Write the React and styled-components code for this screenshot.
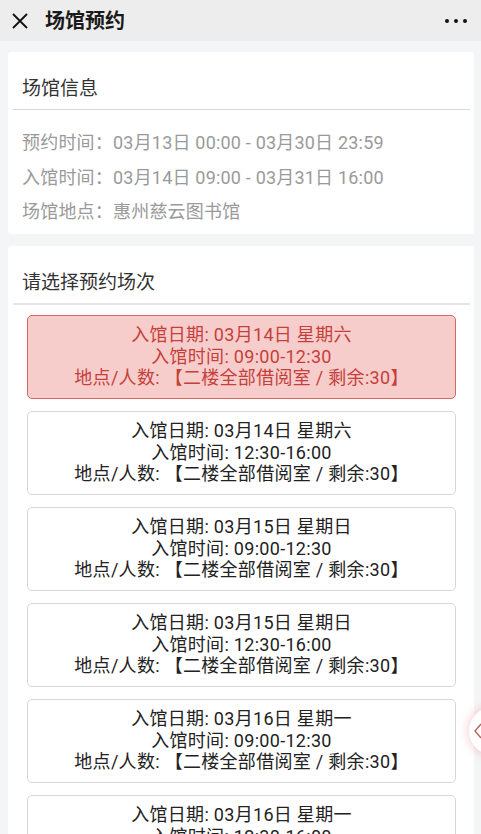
import React from 'react'
import styled, { createGlobalStyle } from 'styled-components'

const GlobalStyle = createGlobalStyle`
  html, body {
    margin: 0;
    padding: 0;
    background: #f4f5f7;
    font-family: Roboto, "Noto Sans CJK SC", sans-serif;
  }
`

const Page = styled.div`
  min-height: 100vh;
  background: #f4f5f7;
`

const TopBar = styled.div`
  height: 41px;
  background: #ededed;
  display: flex;
  align-items: center;
  padding: 0 14px 0 10px;
`

const CloseButton = styled.div`
  width: 20px;
  height: 20px;
  display: flex;
  align-items: center;
  justify-content: center;
  margin-right: 15px;
`

const Title = styled.div`
  flex: 1;
  font-size: 20px;
  font-weight: 600;
  color: #1a1a1a;
  margin-top: -2px;
`

const Dots = styled.div`
  display: flex;
  gap: 5px;
  align-items: center;
  span {
    width: 4px;
    height: 4px;
    border-radius: 50%;
    background: #111;
  }
`

const Content = styled.div`
  padding: 11px 7px 0 8px;
  display: flex;
  flex-direction: column;
  gap: 12px;
`

const Card = styled.div`
  background: #fff;
  border-radius: 3px;
  padding-bottom: ${p => p.$pb || 0}px;
`

const CardTitle = styled.div`
  height: 57px;
  box-sizing: border-box;
  padding: 12px 0 0 14px;
  display: flex;
  align-items: center;
  font-size: 19px;
  color: #333;
`

const Divider = styled.div`
  height: ${p => p.$thick ? 2 : 1}px;
  background: ${p => p.$thick ? '#e6e6e6' : '#d8d8d8'};
  margin: 0 4px 0 5px;
`

const InfoList = styled.div`
  padding: 16px 0 0 14px;
`

const InfoLine = styled.div`
  height: 34.5px;
  line-height: 34.5px;
  font-size: 18px;
  letter-spacing: 0.2px;
  color: #9a9a9a;
  white-space: nowrap;
`

const SlotList = styled.div`
  padding: 10px 18px 0 19px;
  display: flex;
  flex-direction: column;
  gap: 12px;
`

const Slot = styled.div`
  height: 84px;
  box-sizing: border-box;
  border: 1px solid ${p => p.$active ? '#cf6b64' : '#d6d6d6'};
  background: ${p => p.$active ? '#f7cdcc' : '#fff'};
  color: ${p => p.$active ? '#c5403a' : '#222'};
  border-radius: 5px;
  display: flex;
  flex-direction: column;
  align-items: center;
  justify-content: center;
  font-size: 18px;
  letter-spacing: 0.3px;
  line-height: 21.5px;
  white-space: nowrap;
`

const SideButton = styled.div`
  position: fixed;
  right: -36px;
  top: 707px;
  width: 48px;
  height: 48px;
  border-radius: 50%;
  background: #fff;
  box-shadow: 0 0 8px 2px rgba(230, 140, 140, 0.35);
  display: flex;
  align-items: center;
  padding-left: 4px;
  box-sizing: border-box;
`

const slots = [
  { date: '03月14日 星期六', time: '09:00-12:30', active: true },
  { date: '03月14日 星期六', time: '12:30-16:00' },
  { date: '03月15日 星期日', time: '09:00-12:30' },
  { date: '03月15日 星期日', time: '12:30-16:00' },
  { date: '03月16日 星期一', time: '09:00-12:30' },
  { date: '03月16日 星期一', time: '12:30-16:00' },
]

export default function App() {
  return (
    <Page>
      <GlobalStyle />
      <TopBar>
        <CloseButton>
          <svg width="18" height="18" viewBox="0 0 18 18">
            <path d="M2 2 L16 16 M16 2 L2 16" stroke="#111" strokeWidth="1.8" fill="none" />
          </svg>
        </CloseButton>
        <Title>场馆预约</Title>
        <Dots><span /><span /><span /></Dots>
      </TopBar>
      <Content>
        <Card $pb={4}>
          <CardTitle>场馆信息</CardTitle>
          <Divider />
          <InfoList>
            <InfoLine>预约时间：03月13日 00:00 - 03月30日 23:59</InfoLine>
            <InfoLine>入馆时间：03月14日 09:00 - 03月31日 16:00</InfoLine>
            <InfoLine>场馆地点：惠州慈云图书馆</InfoLine>
          </InfoList>
        </Card>
        <Card>
          <CardTitle>请选择预约场次</CardTitle>
          <Divider $thick />
          <SlotList>
            {slots.map((s, i) => (
              <Slot key={i} $active={s.active}>
                <div>入馆日期: {s.date}</div>
                <div>入馆时间: {s.time}</div>
                <div>地点/人数: 【二楼全部借阅室 / 剩余:30】</div>
              </Slot>
            ))}
          </SlotList>
        </Card>
      </Content>
      <SideButton>
        <svg width="10" height="16" viewBox="0 0 10 16">
          <path d="M8 1 L2 8 L8 15" stroke="#b5655c" strokeWidth="1.4" fill="none" />
        </svg>
      </SideButton>
    </Page>
  )
}
